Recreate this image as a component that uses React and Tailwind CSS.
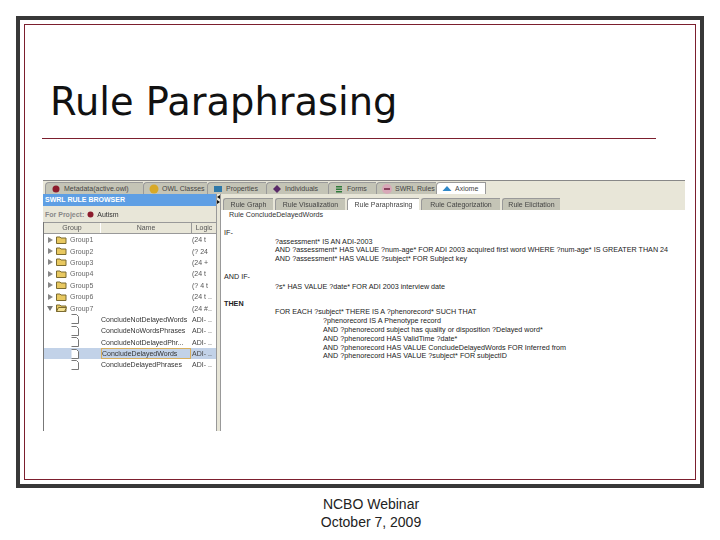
const TABS = [
  { label: "Metadata(active.owl)", w: "w-[98px]", icon: <circle cx="5" cy="5" r="3.5" fill="#8c1c2c" /> },
  { label: "OWL Classes", w: "w-[64px]", icon: <circle cx="5" cy="5" r="4.5" fill="#d8a928" /> },
  { label: "Properties", w: "w-[59px]", icon: <rect x="1" y="2" width="8" height="6" fill="#2f78a8" /> },
  { label: "Individuals", w: "w-[62px]", icon: <path d="M5 1l4 4-4 4-4-4z" fill="#5a2a68" /> },
  { label: "Forms", w: "w-[48px]", icon: <path d="M2 2h6v1.5H2zM2 4.5h6V6H2zM2 7h6v1.5H2z" fill="#2f7a3a" /> },
  { label: "SWRL Rules", w: "w-[60px]", icon: <><circle cx="5" cy="5" r="5" fill="#d8a8b8" /><path d="M2 5h6" stroke="#702040" strokeWidth="1.5" /></> },
  { label: "Axiome", w: "w-[50px]", active: true, icon: <path d="M5 2l4.5 5H.5z" fill="#2f88c8" /> },
];
const SUBTABS = [
  { label: "Rule Graph", w: "w-[50px]" },
  { label: "Rule Visualization", w: "w-[70px]" },
  { label: "Rule Paraphrasing", w: "w-[72px]", active: true },
  { label: "Rule Categorization", w: "w-[79px]" },
  { label: "Rule Elicitation", w: "w-[58px]" },
];
const GROUPS = [
  ["Group1", "(24 t"], ["Group2", "(? 24"], ["Group3", "(24 +"], ["Group4", "(24 t"], ["Group5", "(? 4 t"], ["Group6", "(24 t .."],
];
const RULES = [
  "ConcludeNotDelayedWords",
  "ConcludeNoWordsPhrases",
  "ConcludeNotDelayedPhr...",
  "ConcludeDelayedWords",
  "ConcludeDelayedPhrases",
];

function Folder({ open }) {
  return (
    <svg width="11" height="10" viewBox="0 0 11 10" className="shrink-0">
      <path d="M.5 8.5V2h3.5l1 1h5v5.5z" fill="#e8c860" stroke="#7a6a30" strokeWidth="1" />
      {open && <path d="M.5 8.5l2-4h8l-2 4z" fill="#f4e090" stroke="#7a6a30" strokeWidth="1" />}
    </svg>
  );
}

function FileIcon() {
  return (
    <svg width="8" height="10" viewBox="0 0 8 10" className="shrink-0">
      <path d="M.5.5h5l2 2v7H.5" fill="#fff" stroke="#777" strokeWidth="1" />
    </svg>
  );
}

function GroupRow({ name, logic, open }) {
  return (
    <div className="flex items-center h-[11.4px]">
      <div className="w-[57px] flex items-center pl-[3px] shrink-0">
        <svg width="6" height="6" viewBox="0 0 6 6" className="shrink-0 mr-[3px]">
          {open ? <path d="M0 1h6L3 6z" fill="#777" /> : <path d="M1 0l5 3-5 3z" fill="#888" />}
        </svg>
        <Folder open={open} />
        <span className="ml-[3px] text-[#666]">{name}</span>
      </div>
      <div className="ml-auto w-[24px] text-[#555] whitespace-nowrap overflow-hidden">{logic}</div>
    </div>
  );
}

function RuleRow({ name, selected }) {
  return (
    <div className={`flex items-center h-[11.4px] ${selected ? "bg-[#c2d2e8]" : ""}`}>
      <div className="w-[27px] shrink-0" />
      <FileIcon />
      <div className={`ml-[22px] w-[90px] h-full whitespace-nowrap overflow-hidden text-[#333] ${selected ? "border border-[#d8b060] leading-[9.4px]" : "leading-[11.4px]"}`}>{name}</div>
      <div className="ml-auto w-[24px] text-[#444] whitespace-nowrap overflow-hidden">ADI- ..</div>
    </div>
  );
}

export default function App() {
  return (
    <div className="w-[720px] h-[540px] bg-white overflow-hidden font-['Liberation_Sans',sans-serif] pt-4 px-4">
      <div className="w-[688px] h-[472px] border-4 border-[#383838] p-1">
        <div className="h-full border border-[#7c1f2e] pl-[25px] pr-[8px]">
          <h1 className="h-[107px] pt-[53px] font-['DejaVu_Sans',sans-serif] text-[38.4px] leading-[48px] text-[#111] whitespace-nowrap">Rule Paraphrasing</h1>
          <div className="mt-[6px] -ml-[8px] w-[614px] h-px bg-[#7c1f2e]" />

          <div className="mt-[41px] -ml-[8px] pl-[1px] w-[643px] h-[251px] flex flex-col text-[7px] leading-[9px] blur-[0.3px]">
            <div className="h-[14px] bg-[#e8e6d8] flex items-end pl-[2px] border-t border-[#888] shrink-0">
              {TABS.map((t) => (
                <div key={t.label} className={`${t.w} h-[12px] flex items-center gap-[3px] pl-[5px] border-l border-t border-[#999] rounded-tl-[4px] whitespace-nowrap overflow-hidden ${t.active ? "bg-white border-r" : "bg-[#c4c4b6]"} text-[#444]`}>
                  <svg width="10" height="10" viewBox="0 0 10 10" className="shrink-0">{t.icon}</svg>
                  <span>{t.label}</span>
                </div>
              ))}
            </div>
            <div className="flex-1 flex min-h-0">
              <div className="w-[173px] shrink-0 flex flex-col">
                <div className="h-[12px] shrink-0 bg-[#5f9fe4] text-white font-bold pl-[2px] leading-[12px]">SWRL RULE BROWSER</div>
                <div className="h-[16px] shrink-0 bg-[#e8e6d8] flex items-center pl-[2px] gap-[3px]">
                  <span className="text-[#888] font-bold">For Project:</span>
                  <svg width="7" height="7" viewBox="0 0 7 7" className="shrink-0"><circle cx="3.5" cy="3.5" r="3" fill="#8c1c2c" /></svg>
                  <span className="text-[#333]">Autism</span>
                </div>
                <div className="flex-1 border-l border-[#777] bg-white flex flex-col">
                  <div className="h-[12px] shrink-0 bg-[#e8e6d8] border-t border-b border-[#999] flex text-[#555] text-center">
                    <div className="w-[57px] border-r border-white">Group</div>
                    <div className="flex-1 border-r border-[#999]">Name</div>
                    <div className="w-[24px]">Logic</div>
                  </div>
                  <div>
                    {GROUPS.map(([n, l]) => <GroupRow key={n} name={n} logic={l} />)}
                    <GroupRow name="Group7" logic="(24 #.." open />
                    {RULES.map((r, i) => <RuleRow key={r} name={r} selected={i === 3} />)}
                  </div>
                </div>
              </div>

              <div className="w-[5px] shrink-0 bg-[#e8e6d8] border-l border-[#999] border-r flex flex-col items-center pt-[1px]">
                <svg width="3" height="10" viewBox="0 0 3 10"><path d="M3 0v4L0 2zM0 5l3 2-3 2z" fill="#111" /></svg>
              </div>

              <div className="flex-1 flex flex-col min-w-0">
                <div className="h-[16px] shrink-0 bg-[#e8e6d8] flex items-end">
                  {SUBTABS.map((t) => (
                    <div key={t.label} className={`${t.w} h-[12px] ml-[2px] flex items-center justify-center border-l border-t border-[#999] rounded-tl-[3px] whitespace-nowrap overflow-hidden text-[#444] ${t.active ? "bg-white" : "bg-[#c4c4b6]"}`}>{t.label}</div>
                  ))}
                </div>
                <div className="flex-1 bg-white text-[#222] pl-[3px] text-[7.2px] leading-[8.8px]">
                  <div className="pt-[1px] pl-[5px] text-[#333]">Rule ConcludeDelayedWords</div>
                  <div className="mt-[9px]">IF-</div>
                  <div className="pl-[51px]">
                    <div>?assessment* IS AN ADI-2003</div>
                    <div>AND ?assessment* HAS VALUE ?num-age* FOR ADI 2003 acquired first word WHERE ?num-age* IS GREATER THAN 24</div>
                    <div>AND ?assessment* HAS VALUE ?subject* FOR Subject key</div>
                  </div>
                  <div className="mt-[9px]">AND IF-</div>
                  <div className="pl-[51px] mt-[1px]">?s* HAS VALUE ?date* FOR ADI 2003 interview date</div>
                  <div className="mt-[8px] font-bold">THEN</div>
                  <div className="pl-[51px]">FOR EACH ?subject* THERE IS A ?phenorecord* SUCH THAT</div>
                  <div className="pl-[99px]">
                    <div>?phenorecord IS A Phenotype record</div>
                    <div>AND ?phenorecord subject has quality or disposition ?Delayed word*</div>
                    <div>AND ?phenorecord HAS ValidTime ?date*</div>
                    <div>AND ?phenorecord HAS VALUE ConcludeDelayedWords FOR Inferred from</div>
                    <div>AND ?phenorecord HAS VALUE ?subject* FOR subjectID</div>
                  </div>
                </div>
              </div>
            </div>
          </div>
        </div>
      </div>
      <div className="pt-[7px] text-center text-[14px] leading-[18px] text-[#222] w-[710px]">
        <div>NCBO Webinar</div>
        <div>October 7, 2009</div>
      </div>
    </div>
  );
}
